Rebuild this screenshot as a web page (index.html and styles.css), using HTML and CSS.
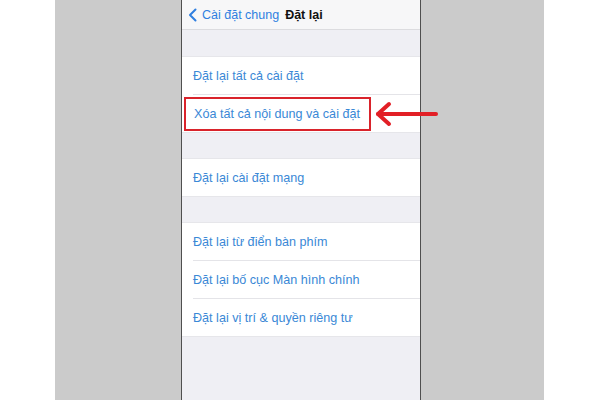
FILE: index.html
```html
<!DOCTYPE html>
<html lang="vi">
<head>
  <meta charset="UTF-8">
  <title>Đặt lại</title>
  <meta name="viewport" content="width=device-width, initial-scale=1.0">
  <link rel="stylesheet" href="styles.css">
</head>
<body>
  <div class="page">
    <div class="blank left"></div>
    <div class="shade left"></div>

    <div class="phone">
      <header class="navbar">
        <span class="back">
          <svg class="chevron" width="9" height="14" viewBox="0 0 9 14">
            <path d="M7.5 1.5 L2 7 L7.5 12.5" fill="none" stroke="#2f7fe0" stroke-width="2" stroke-linecap="round" stroke-linejoin="round"/>
          </svg>
          Cài đặt chung
        </span>
        <span class="title">Đặt lại</span>
      </header>

      <div class="group">
        <div class="row">Đặt lại tất cả cài đặt</div>
        <div class="row"><span class="mark">Xóa tất cả nội dung và cài đặt</span></div>
      </div>

      <div class="group">
        <div class="row">Đặt lại cài đặt mạng</div>
      </div>

      <div class="group">
        <div class="row">Đặt lại từ điển bàn phím</div>
        <div class="row">Đặt lại bố cục Màn hình chính</div>
        <div class="row">Đặt lại vị trí &amp; quyền riêng tư</div>
      </div>
    </div>

    <div class="shade right"></div>
    <div class="blank right"></div>

    <svg class="arrow" width="66" height="26" viewBox="0 0 66 26">
      <path d="M4 13 H62" fill="none" stroke="#e21f26" stroke-width="4" stroke-linecap="round"/>
      <path d="M15 3 L4 13 L15 23" fill="none" stroke="#e21f26" stroke-width="4" stroke-linecap="round" stroke-linejoin="round"/>
    </svg>
  </div>
</body>
</html>
```

FILE: styles.css
```css
body {
  margin: 0;
  font-family: 'Liberation Sans', Arial, sans-serif;
  background: white;
}
.page {
  position: relative;
  display: flex;
  height: 400px;
  overflow: hidden;
}
.blank {
  background: white;
}
.blank.left {
  width: 55px;
}
.blank.right {
  flex: 1;
}
.shade {
  background: #cbcbcb;
}
.shade.left {
  width: 126px;
}
.shade.right {
  width: 123px;
}
.phone {
  width: 238px;
  background: #efeff4;
  border-left: 1px solid #4f4f4f;
  border-right: 1px solid #4f4f4f;
}
.navbar {
  height: 29px;
  display: flex;
  align-items: center;
  gap: 6px;
  padding-left: 6px;
  background: #f7f7f8;
  border-bottom: 1px solid #dcdcdf;
  font-size: 12.5px;
  margin-bottom: 26px;
}
.back {
  display: flex;
  align-items: center;
  gap: 5px;
  color: #2f7fe0;
}
.title {
  font-weight: bold;
  color: #111;
}
.group {
  background: white;
  border-top: 1px solid #e6e6ea;
  border-bottom: 1px solid #e6e6ea;
  margin-bottom: 25px;
}
.row {
  height: 37px;
  display: flex;
  align-items: center;
  margin-left: 11px;
  font-size: 12.6px;
  color: #3a88d6;
  border-bottom: 1px solid #e4e4e8;
}
.row:last-child {
  border-bottom: none;
}
.mark {
  margin-left: -9px;
  padding: 8px 9px 8px 8px;
  border: 2px solid #d9232b;
}
.arrow {
  position: absolute;
  left: 374px;
  top: 101px;
}
```
